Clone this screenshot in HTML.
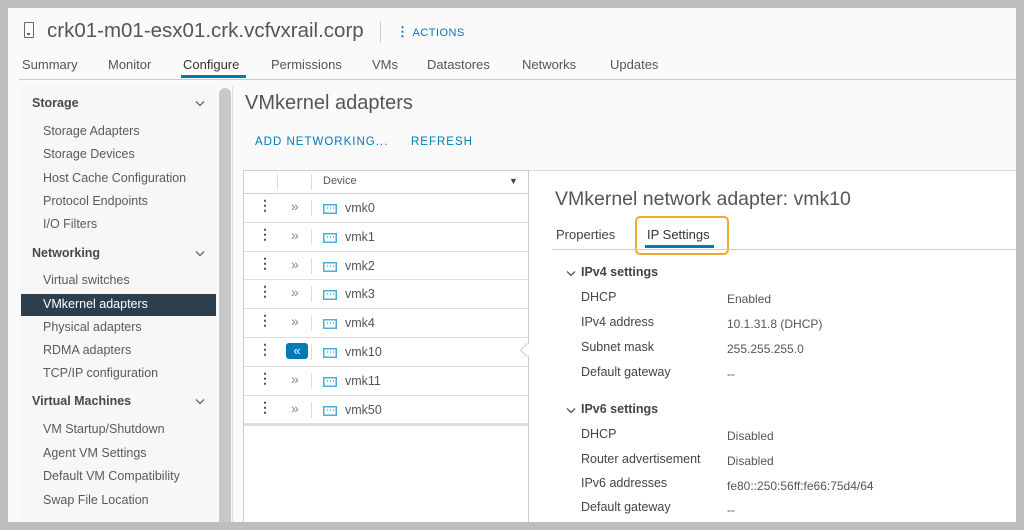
<!DOCTYPE html>
<html><head><style>
*{margin:0;padding:0;box-sizing:border-box}
body{width:1024px;height:530px;background:#bdbdbd;font-family:"Liberation Sans",sans-serif;position:relative;overflow:hidden;color:#333}
.a{position:absolute;white-space:nowrap}
#page{position:absolute;left:8px;top:8px;width:1008px;height:514px;background:#fafafa}
.side{position:absolute;left:20px;top:86px;width:197px;height:436px;background:#f7f7f7}
.si{font-size:12.5px;color:#5a5a5a}
.sh{font-size:12.5px;font-weight:bold;color:#484848}
.row{position:absolute;left:244px;width:284px;border-bottom:1px solid #ddd;background:#fff}
.lbl{font-size:12.5px;color:#444}
.val{font-size:12px;color:#555}
</style></head><body>
<div id="page"></div>
<div class="a" style="left:24px;top:22px;width:10px;height:16px;border:1.5px solid #666;border-radius:1px"></div>
<div class="a" style="left:27px;top:33px;width:3px;height:2px;background:#666"></div>
<div class="a" style="left:47px;top:19px;font-size:20.5px;color:#555">crk01-m01-esx01.crk.vcfvxrail.corp</div>
<div class="a" style="left:380px;top:21px;width:1px;height:22px;background:#ccc"></div>
<div class="a" style="left:396px;top:24px;font-size:11px;color:#0079b8;letter-spacing:.5px"><b style="font-size:13px">&#8942;</b> ACTIONS</div>
<div class="a" style="left:22px;top:57px;font-size:13px;color:#555">Summary</div>
<div class="a" style="left:108px;top:57px;font-size:13px;color:#555">Monitor</div>
<div class="a" style="left:183px;top:57px;font-size:13px;color:#333">Configure</div>
<div class="a" style="left:181px;top:75px;width:65px;height:3px;background:#0079b8"></div>
<div class="a" style="left:271px;top:57px;font-size:13px;color:#555">Permissions</div>
<div class="a" style="left:372px;top:57px;font-size:13px;color:#555">VMs</div>
<div class="a" style="left:427px;top:57px;font-size:13px;color:#555">Datastores</div>
<div class="a" style="left:522px;top:57px;font-size:13px;color:#555">Networks</div>
<div class="a" style="left:610px;top:57px;font-size:13px;color:#555">Updates</div>
<div class="a" style="left:19px;top:79px;width:997px;height:1px;background:#ccc"></div>
<div class="side"></div>
<div class="a" style="left:219px;top:88px;width:12px;height:434px;background:#c8c8c8;border-radius:6px 6px 0 0"></div>
<div class="a" style="left:232px;top:86px;width:1px;height:436px;background:#ddd"></div>
<svg class="a" style="left:195px;top:100px" width="10" height="7"><path d="M1 1.5L5 5.5L9 1.5" fill="none" stroke="#666" stroke-width="1.3"/></svg>
<svg class="a" style="left:195px;top:250px" width="10" height="7"><path d="M1 1.5L5 5.5L9 1.5" fill="none" stroke="#666" stroke-width="1.3"/></svg>
<svg class="a" style="left:195px;top:398px" width="10" height="7"><path d="M1 1.5L5 5.5L9 1.5" fill="none" stroke="#666" stroke-width="1.3"/></svg>
<div class="a sh" style="left:32px;top:96px">Storage</div>
<div class="a si" style="left:43px;top:124px">Storage Adapters</div>
<div class="a si" style="left:43px;top:147px">Storage Devices</div>
<div class="a si" style="left:43px;top:171px">Host Cache Configuration</div>
<div class="a si" style="left:43px;top:194px">Protocol Endpoints</div>
<div class="a si" style="left:43px;top:217px">I/O Filters</div>
<div class="a sh" style="left:32px;top:246px">Networking</div>
<div class="a si" style="left:43px;top:273px">Virtual switches</div>
<div class="a" style="left:21px;top:294px;width:195px;height:22px;background:#2b3f4f"></div>
<div class="a si" style="left:43px;top:297px;color:#fff">VMkernel adapters</div>
<div class="a si" style="left:43px;top:320px">Physical adapters</div>
<div class="a si" style="left:43px;top:343px">RDMA adapters</div>
<div class="a si" style="left:43px;top:366px">TCP/IP configuration</div>
<div class="a sh" style="left:32px;top:394px">Virtual Machines</div>
<div class="a si" style="left:43px;top:422px">VM Startup/Shutdown</div>
<div class="a si" style="left:43px;top:446px">Agent VM Settings</div>
<div class="a si" style="left:43px;top:469px">Default VM Compatibility</div>
<div class="a si" style="left:43px;top:493px">Swap File Location</div>
<div class="a" style="left:245px;top:92px;font-size:20px;color:#555">VMkernel adapters</div>
<div class="a" style="left:255px;top:136px;font-size:11.5px;color:#0079b8;letter-spacing:1px">ADD NETWORKING...</div>
<div class="a" style="left:411px;top:136px;font-size:11.5px;color:#0079b8;letter-spacing:1px">REFRESH</div>
<div class="a" style="left:243px;top:170px;width:286px;height:352px;background:#fff;border:1px solid #ccc;border-bottom:none"></div>
<div class="a" style="left:244px;top:171px;width:284px;height:23px;border-bottom:1px solid #ccc"></div>
<div class="a" style="left:277px;top:174px;width:1px;height:16px;background:#ddd"></div>
<div class="a" style="left:311px;top:174px;width:1px;height:16px;background:#ddd"></div>
<div class="a" style="left:323px;top:175px;font-size:11px;color:#555">Device</div>
<div class="a" style="left:509px;top:176px;font-size:9px;color:#444">&#9660;</div>
<div id="rows"></div>
<script>
var n=['vmk0','vmk1','vmk2','vmk3','vmk4','vmk10','vmk11','vmk50'],h='';
for(var i=0;i<8;i++){var t=Math.round(194+i*28.8),t2=Math.round(194+(i+1)*28.8);
h+='<div class="row" style="top:'+t+'px;height:'+(t2-t)+'px"></div>';
h+='<div class="a" style="left:258px;top:'+(t+3)+'px;font-size:14px;color:#555;font-weight:bold">&#8942;</div>';
if(i==5)h+='<div class="a" style="left:286px;top:'+(t+5)+'px;width:22px;height:16px;background:#0079b8;border-radius:3px;color:#fff;font-size:13px;text-align:center;line-height:15px">&#171;</div>';
else h+='<div class="a" style="left:291px;top:'+(t+4)+'px;font-size:14px;color:#888">&#187;</div>';
h+='<div class="a" style="left:311px;top:'+(t+6)+'px;width:1px;height:16px;background:#ddd"></div>';
h+='<svg class="a" style="left:323px;top:'+(t+10)+'px" width="14" height="10"><rect x="0.75" y="0.75" width="12.5" height="8.5" fill="none" stroke="#49afd9" stroke-width="1.5"/><path d="M4 4h1M7 4h1M10 4h1" stroke="#49afd9" stroke-width="1.5"/></svg>';
h+='<div class="a" style="left:345px;top:'+(t+7)+'px;font-size:12.5px;color:#555">'+n[i]+'</div>';}
document.getElementById('rows').innerHTML=h;
</script>
<div class="a" style="left:244px;top:424px;width:284px;height:2px;background:#ddd"></div>
<div class="a" style="left:529px;top:170px;width:487px;height:352px;background:#fff;border-top:1px solid #ddd"></div>
<div class="a" style="left:522px;top:345px;width:10px;height:10px;background:#fff;border-left:1px solid #ccc;border-bottom:1px solid #ccc;transform:rotate(45deg)"></div>
<div class="a" style="left:555px;top:188px;font-size:19.5px;color:#555">VMkernel network adapter: vmk10</div>
<div class="a" style="left:556px;top:227px;font-size:13px;color:#444">Properties</div>
<div class="a" style="left:647px;top:227px;font-size:13px;color:#333">IP Settings</div>
<div class="a" style="left:645px;top:245px;width:69px;height:3px;background:#0079b8"></div>
<div class="a" style="left:635px;top:216px;width:94px;height:39px;border:2.5px solid #f0a92c;border-radius:5px"></div>
<div class="a" style="left:552px;top:249px;width:464px;height:1px;background:#ccc"></div>
<svg class="a" style="left:566px;top:270px" width="10" height="7"><path d="M1 1.5L5 5.5L9 1.5" fill="none" stroke="#555" stroke-width="1.3"/></svg>
<div class="a" style="left:581px;top:265px;font-size:12.5px;color:#444;font-weight:bold">IPv4 settings</div>
<div class="a lbl" style="left:581px;top:290px">DHCP</div><div class="a val" style="left:727px;top:292px">Enabled</div>
<div class="a lbl" style="left:581px;top:315px">IPv4 address</div><div class="a val" style="left:727px;top:317px">10.1.31.8 (DHCP)</div>
<div class="a lbl" style="left:581px;top:340px">Subnet mask</div><div class="a val" style="left:727px;top:342px">255.255.255.0</div>
<div class="a lbl" style="left:581px;top:365px">Default gateway</div><div class="a val" style="left:727px;top:367px">--</div>
<svg class="a" style="left:566px;top:407px" width="10" height="7"><path d="M1 1.5L5 5.5L9 1.5" fill="none" stroke="#555" stroke-width="1.3"/></svg>
<div class="a" style="left:581px;top:402px;font-size:12.5px;color:#444;font-weight:bold">IPv6 settings</div>
<div class="a lbl" style="left:581px;top:427px">DHCP</div><div class="a val" style="left:727px;top:429px">Disabled</div>
<div class="a lbl" style="left:581px;top:452px">Router advertisement</div><div class="a val" style="left:727px;top:454px">Disabled</div>
<div class="a lbl" style="left:581px;top:476px">IPv6 addresses</div><div class="a val" style="left:727px;top:479px">fe80::250:56ff:fe66:75d4/64</div>
<div class="a lbl" style="left:581px;top:500px">Default gateway</div><div class="a val" style="left:727px;top:503px">--</div>
</body></html>
